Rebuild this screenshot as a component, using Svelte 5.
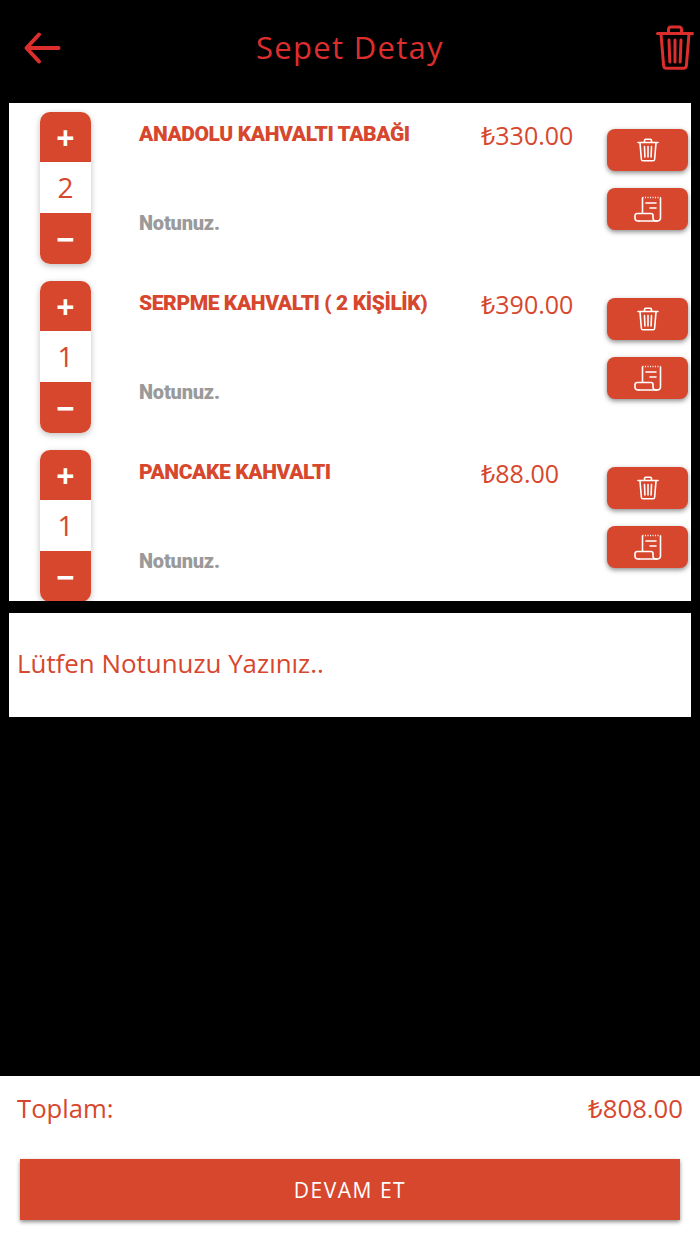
<script>
  const items = [
    { name: 'ANADOLU KAHVALTI TABAĞI', price: '₺330.00', qty: 2 },
    { name: 'SERPME KAHVALTI ( 2 KİŞİLİK)', price: '₺390.00', qty: 1 },
    { name: 'PANCAKE KAHVALTI', price: '₺88.00', qty: 1 }
  ]
</script>

<div class="page">
  <header>
    <svg class="back" viewBox="0 0 38 34" width="38" height="34">
      <path d="M35.500 17H3.500M16 3.500L3.500 17 16 30.500" fill="none" stroke="#dd2e2e" stroke-width="4" stroke-linecap="round" stroke-linejoin="round" />
    </svg>
    <h1>Sepet Detay</h1>
    <svg class="trash" viewBox="0 0 38 46" width="38" height="46">
      <g fill="none" stroke="#dd2e2e" stroke-width="3" stroke-linecap="round" stroke-linejoin="round">
        <path d="M1.500 8.500h35M12.500 8V4.500a2.500 2.500 0 0 1 2.500-2.500h8a2.500 2.500 0 0 1 2.500 2.500V8" />
        <path d="M5 9l2.600 31.500a3 3 0 0 0 3 2.800h16.800a3 3 0 0 0 3-2.800L33 9" />
        <path d="M13 15l.8 22M19 15v22M25 15l-.8 22" />
      </g>
    </svg>
  </header>

  <section class="list">
    {#each items as item}
      <div class="row">
        <div class="stepper">
          <div class="step">+</div>
          <div class="qty">{item.qty}</div>
          <div class="step minus">−</div>
        </div>
        <div class="info">
          <div class="name">{item.name}</div>
          <div class="note">Notunuz.</div>
        </div>
        <div class="price">{item.price}</div>
        <div class="actions">
          <div class="btn">
            <svg viewBox="0 0 22 24" width="22" height="24">
              <g fill="none" stroke="#fff" stroke-width="1.6" stroke-linecap="round" stroke-linejoin="round">
                <path d="M1 4.500h20M7.500 4.500V2.500a1.200 1.200 0 0 1 1.200-1.200h4.600a1.200 1.200 0 0 1 1.200 1.200v2" />
                <path d="M3 5l1.400 16.500a1.500 1.500 0 0 0 1.500 1.300h10.200a1.500 1.500 0 0 0 1.500-1.300L19 5" />
                <path d="M7.500 8.500l.4 10.500M11 8.500V19M14.500 8.500l-.4 10.500" />
              </g>
            </svg>
          </div>
          <div class="btn">
            <svg viewBox="0 0 28 26" width="28" height="26">
              <g fill="none" stroke="#fff" stroke-width="1.6" stroke-linecap="round" stroke-linejoin="round">
                <path d="M8.500 17V2" />
                <path d="M8.500 1.500h18" stroke-dasharray="1 1.500" stroke-linecap="butt" />
                <path d="M26.500 2v20a3 3 0 0 1-3 3H5" />
                <path d="M5 25H4a3 3 0 0 1-3-3v-2.500A2 2 0 0 1 3 17.500h14a2 2 0 0 1 2 2V22a3 3 0 0 0 3 3h1" />
                <path d="M12 7h10M16 12h6" />
              </g>
            </svg>
          </div>
        </div>
      </div>
    {/each}
  </section>

  <div class="note-box">Lütfen Notunuzu Yazınız..</div>

  <footer>
    <div class="total">
      <span>Toplam:</span>
      <span>₺808.00</span>
    </div>
    <div class="continue">DEVAM ET</div>
  </footer>
</div>

<style>
  :global(body) {
    margin: 0;
    background: #000;
  }

  .page {
    width: 700px;
    height: 1244px;
    background: #000;
    display: flex;
    flex-direction: column;
    font-family: "Open Sans", "Noto Sans", sans-serif;
    color: #d7472d;
    overflow: hidden;
  }

  header {
    height: 103px;
    flex: none;
    display: flex;
    align-items: center;
    justify-content: space-between;
    padding: 0 6px 8px 23px;
    box-sizing: border-box;
    position: relative;
  }

  header h1 {
    position: absolute;
    left: 0;
    right: 0;
    top: 26px;
    margin: 0;
    text-align: center;
    font-size: 31px;
    line-height: 42px;
    font-weight: 400;
    letter-spacing: 1.3px;
    color: #dd2e2e;
  }

  .list {
    margin: 0 9px;
    height: 498px;
    flex: none;
    background: #fff;
    overflow: hidden;
  }

  .row {
    height: 169px;
    display: grid;
    grid-template-columns: 130px 342px 126px 84px;
    position: relative;
  }

  .stepper {
    margin: 9px 0 0 31px;
    width: 51px;
    height: 152px;
    border-radius: 10px;
    overflow: hidden;
    box-shadow: 0 2px 6px rgba(0, 0, 0, 0.25);
    display: flex;
    flex-direction: column;
  }

  .step {
    height: 50px;
    padding-top: 1px;
    box-sizing: border-box;
    background: #d7472d;
    color: #fff;
    display: flex;
    align-items: center;
    justify-content: center;
    font-size: 32px;
    font-weight: 700;
    line-height: 1;
  }

  .qty {
    height: 51px;
    padding-bottom: 2px;
    box-sizing: border-box;
    display: flex;
    align-items: center;
    justify-content: center;
    font-size: 28px;
    background: #fff;
  }

  .minus {
    height: 51px;
  }

  .info {
    display: flex;
    flex-direction: column;
    padding-top: 18px;
  }

  .name {
    font-family: Roboto, "Open Sans", sans-serif;
    font-size: 21px;
    line-height: 27px;
    font-weight: 900;
    letter-spacing: -0.4px;
    white-space: nowrap;
  }

  .note {
    margin-top: 63px;
    font-family: Roboto, "Open Sans", sans-serif;
    font-size: 20px;
    line-height: 24px;
    font-weight: 900;
    letter-spacing: -0.2px;
    color: #9a9a9a;
  }

  .price {
    padding-top: 15px;
    font-size: 25px;
    line-height: 34px;
    white-space: nowrap;
  }

  .actions {
    display: flex;
    flex-direction: column;
    gap: 17px;
    padding-top: 26px;
  }

  .btn {
    width: 81px;
    height: 42px;
    flex: none;
    background: #d7472d;
    border-radius: 8px;
    box-shadow: 0 2px 5px rgba(0, 0, 0, 0.45);
    display: flex;
    align-items: center;
    justify-content: center;
  }

  .note-box {
    margin: 12px 9px 0;
    height: 104px;
    flex: none;
    background: #fff;
    display: flex;
    align-items: center;
    padding: 0 0 4px 8px;
    font-size: 25.9px;
    box-sizing: border-box;
  }

  footer {
    margin-top: auto;
    height: 168px;
    flex: none;
    background: #fff;
    padding: 15px 17px 0;
    box-sizing: border-box;
  }

  .total {
    display: flex;
    justify-content: space-between;
    font-size: 25.7px;
    line-height: 36px;
  }

  .continue {
    margin: 32px 3px 0;
    height: 61px;
    background: #d7472d;
    box-shadow: 0 2px 4px rgba(0, 0, 0, 0.45);
    color: #fff;
    display: flex;
    align-items: center;
    justify-content: center;
    font-size: 21px;
    letter-spacing: 1.5px;
  }
</style>
